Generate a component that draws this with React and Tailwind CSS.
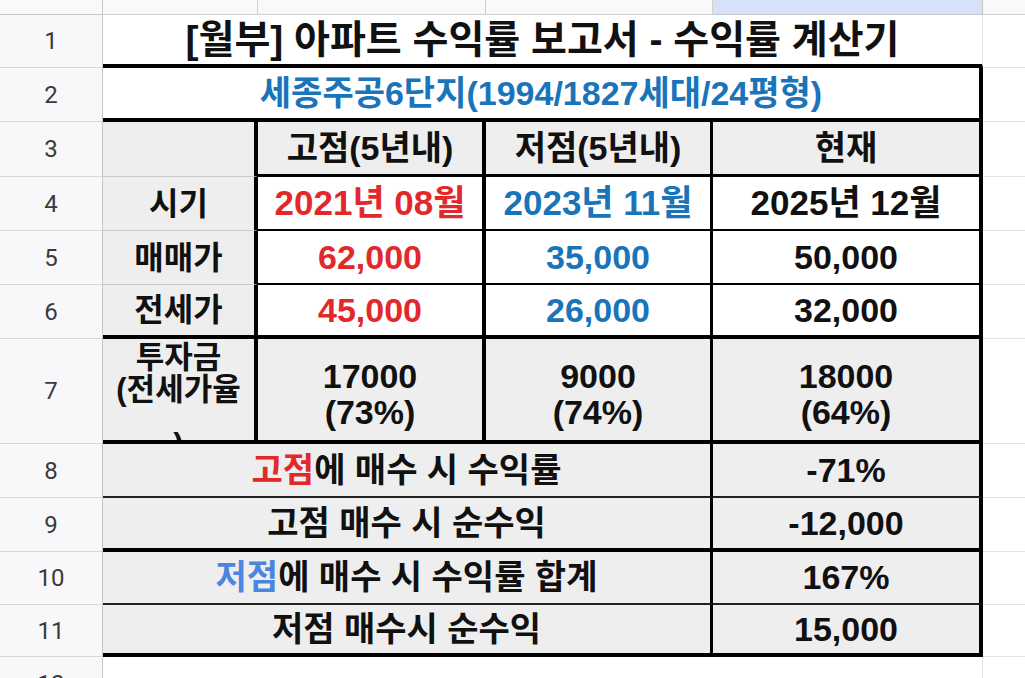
import React from 'react';

function RowHead({ n }) {
    return (
        <div className="flex items-center justify-center bg-[#f8f8fb] border-r border-b border-r-[#c6c6c6] border-b-[#d9d9d9] text-[24px] font-normal text-[#3a3a3a] font-['Roboto',sans-serif]">
            {n}
        </div>
    );
}

function Cell({ className = '', children }) {
    return (
        <div className={'flex items-center justify-center text-center overflow-hidden whitespace-pre ' + className}>
            {children}
        </div>
    );
}

function Spare() {
    return <div className="border-b border-b-[#e2e2e2]" />;
}

const GRAY = 'bg-[#eeeeee]';
const RED = 'text-[#e3282c]';
const BLUE = 'text-[#1a74ba]';
const LABEL = GRAY + ' text-[32px] border-r-4 border-r-black';

export default function App() {
    return (
        <div className="w-[1025px] h-[678px] overflow-hidden bg-white font-['Liberation_Sans','Noto_Sans_CJK_KR',sans-serif] font-bold text-[34px] text-[#111]">
            <div className="grid grid-cols-[103px_155px_228px_227px_270px_1fr] grid-rows-[15px_53px_54px_55px_54px_54px_54px_105px_54px_54px_53px_52px_54px]">
                {/* column headers */}
                <div className="bg-[#f8f9fa] border-r border-b border-[#c6c6c6]" />
                <div className="bg-[#f8f9fa] border-r border-b border-[#d0d0d0]" />
                <div className="bg-[#f8f9fa] border-r border-b border-[#d0d0d0]" />
                <div className="bg-[#f8f9fa] border-r border-b border-[#d0d0d0]" />
                <div className="bg-[#d6e2fa] border-r border-b border-[#c6c6c6]" />
                <div className="bg-[#f8f9fa] border-b border-[#d0d0d0]" />

                {/* 1 */}
                <RowHead n="1" />
                <Cell className="col-span-4 border-b-4 border-b-black border-r border-r-[#e2e2e2] text-[39px] pt-[2px]">
                    [월부] 아파트 수익률 보고서 - 수익률 계산기
                </Cell>
                <Spare />

                {/* 2 */}
                <RowHead n="2" />
                <Cell className={'col-span-4 border-b-4 border-r-4 border-black ' + BLUE}>
                    세종주공6단지(1994/1827세대/24평형)
                </Cell>
                <Spare />

                {/* 3 */}
                <RowHead n="3" />
                <Cell className={GRAY + ' border-b border-b-[#c8c8c8] border-r-4 border-r-black'} />
                <Cell className={GRAY + ' border-b-[3px] border-b-black border-r-4 border-r-black'}>고점(5년내)</Cell>
                <Cell className={GRAY + ' border-b-[3px] border-b-black border-r-[3px] border-r-black'}>저점(5년내)</Cell>
                <Cell className={GRAY + ' border-b-[3px] border-b-black border-r-4 border-r-black'}>현재</Cell>
                <Spare />

                {/* 4 */}
                <RowHead n="4" />
                <Cell className={LABEL + ' border-b border-b-[#c8c8c8]'}>시기</Cell>
                <Cell className={'text-[35px] border-b-2 border-b-black border-r-4 border-r-black ' + RED}>2021년 08월</Cell>
                <Cell className={'text-[35px] border-b-2 border-b-black border-r-[3px] border-r-black ' + BLUE}>2023년 11월</Cell>
                <Cell className="text-[35px] border-b-2 border-b-black border-r-4 border-r-black">2025년 12월</Cell>
                <Spare />

                {/* 5 */}
                <RowHead n="5" />
                <Cell className={LABEL + ' border-b border-b-[#c8c8c8]'}>매매가</Cell>
                <Cell className={'border-b-2 border-b-black border-r-4 border-r-black ' + RED}>62,000</Cell>
                <Cell className={'border-b-2 border-b-black border-r-[3px] border-r-black ' + BLUE}>35,000</Cell>
                <Cell className="border-b-2 border-b-black border-r-4 border-r-black">50,000</Cell>
                <Spare />

                {/* 6 */}
                <RowHead n="6" />
                <Cell className={LABEL + ' border-b-4 border-b-black'}>전세가</Cell>
                <Cell className={'border-b-4 border-b-black border-r-4 border-r-black ' + RED}>45,000</Cell>
                <Cell className={'border-b-4 border-b-black border-r-[3px] border-r-black ' + BLUE}>26,000</Cell>
                <Cell className="border-b-4 border-b-black border-r-4 border-r-black">32,000</Cell>
                <Spare />

                {/* 7 - wrapped label overflows its cell, as in the sheet */}
                <RowHead n="7" />
                <div className={GRAY + ' flex flex-col items-center overflow-hidden pt-[3px] text-[31px] leading-[32px] border-b-4 border-b-black border-r-4 border-r-black'}>
                    <div className="shrink-0">투자금</div>
                    <div className="shrink-0">(전세가율</div>
                    <div className="shrink-0 mt-[23px]">)</div>
                </div>
                {[
                    ['17000', '(73%)', 'border-r-4'],
                    ['9000', '(74%)', 'border-r-[3px]'],
                    ['18000', '(64%)', 'border-r-4'],
                ].map(([amount, rate, edge]) => (
                    <div key={amount} className={GRAY + ' flex flex-col items-center justify-center pt-[8px] leading-[36px] border-b-4 border-b-black border-r-black ' + edge}>
                        <div>{amount}</div>
                        <div>{rate}</div>
                    </div>
                ))}
                <Spare />

                {/* 8 */}
                <RowHead n="8" />
                <Cell className={GRAY + ' col-span-3 border-b-2 border-b-[#222] border-r-[3px] border-r-black'}>
                    <span><span className={RED}>고점</span>에 매수 시 수익률</span>
                </Cell>
                <Cell className={GRAY + ' border-b-2 border-b-[#222] border-r-4 border-r-black'}>-71%</Cell>
                <Spare />

                {/* 9 */}
                <RowHead n="9" />
                <Cell className={GRAY + ' col-span-3 border-b-4 border-b-black border-r-[3px] border-r-black'}>고점 매수 시 순수익</Cell>
                <Cell className={GRAY + ' border-b-4 border-b-black border-r-4 border-r-black'}>-12,000</Cell>
                <Spare />

                {/* 10 */}
                <RowHead n="10" />
                <Cell className={GRAY + ' col-span-3 border-b-2 border-b-[#222] border-r-[3px] border-r-black'}>
                    <span><span className="text-[#4a86e0]">저점</span>에 매수 시 수익률 합계</span>
                </Cell>
                <Cell className={GRAY + ' border-b-2 border-b-[#222] border-r-4 border-r-black'}>167%</Cell>
                <Spare />

                {/* 11 */}
                <RowHead n="11" />
                <Cell className={GRAY + ' col-span-3 border-b-4 border-b-black border-r-[3px] border-r-black'}>저점 매수시 순수익</Cell>
                <Cell className={GRAY + ' border-b-4 border-b-black border-r-4 border-r-black'}>15,000</Cell>
                <Spare />

                {/* 12 */}
                <RowHead n="12" />
                <div className="col-span-4 border-r border-r-[#e2e2e2]" />
                <div />
            </div>
        </div>
    );
}
